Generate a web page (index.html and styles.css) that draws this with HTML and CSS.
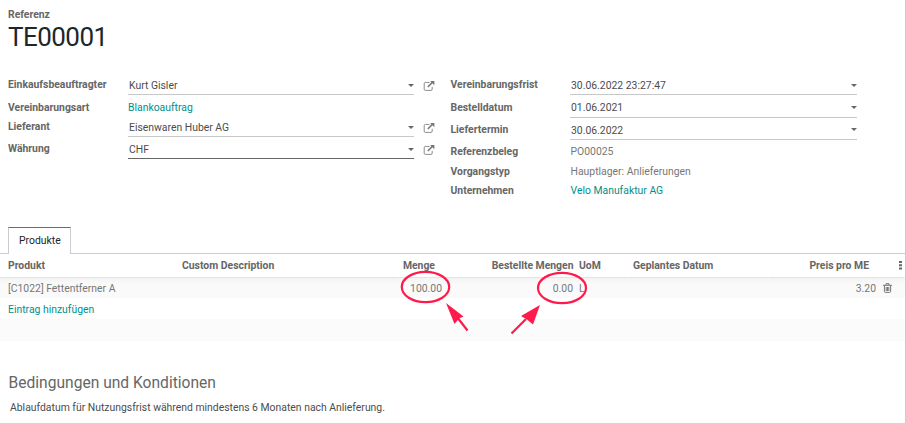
FILE: index.html
```html
<!DOCTYPE html>
<html lang="de">
<head>
<meta charset="utf-8">
<title>TE00001</title>
<link rel="stylesheet" href="styles.css">
</head>
<body>
<svg class="defs" width="0" height="0">
  <symbol id="ext" viewBox="0 0 12 12">
    <path d="M6.5 2.4H2.4Q1.2 2.4 1.2 3.6V9.2Q1.2 10.4 2.4 10.4H8Q9.2 10.4 9.2 9.2V6.8" fill="none" stroke="currentColor" stroke-width=".85"/>
    <path d="M4.8 7L9.4 2.4" stroke="currentColor" stroke-width="1.5"/>
    <path d="M7.2 1H11.4V5.2Z" fill="currentColor"/>
  </symbol>
</svg>
<main class="sheet">
  <header class="title">
    <div class="label">Referenz</div>
    <h1>TE00001</h1>
  </header>
  <section class="groups">
    <div class="group">
      <div class="field"><span class="label">Einkaufsbeauftragter</span><span class="input">Kurt Gisler<i class="caret"></i></span><svg class="ext"><use href="#ext"/></svg></div>
      <div class="field art"><span class="label">Vereinbarungsart</span><span class="value link">Blankoauftrag</span></div>
      <div class="field"><span class="label">Lieferant</span><span class="input">Eisenwaren Huber AG<i class="caret"></i></span><svg class="ext"><use href="#ext"/></svg></div>
      <div class="field currency"><span class="label">Währung</span><span class="input active">CHF<i class="caret"></i></span><svg class="ext"><use href="#ext"/></svg></div>
    </div>
    <div class="group right">
      <div class="field"><span class="label">Vereinbarungsfrist</span><span class="input">30.06.2022 23:27:47<i class="caret"></i></span></div>
      <div class="field ordered"><span class="label">Bestelldatum</span><span class="input">01.06.2021<i class="caret"></i></span></div>
      <div class="field delivery"><span class="label">Liefertermin</span><span class="input">30.06.2022<i class="caret"></i></span></div>
      <div class="field plain"><span class="label">Referenzbeleg</span><span class="value">PO00025</span></div>
      <div class="field plain"><span class="label">Vorgangstyp</span><span class="value">Hauptlager: Anlieferungen</span></div>
      <div class="field plain last"><span class="label">Unternehmen</span><span class="value link">Velo Manufaktur AG</span></div>
    </div>
  </section>
  <nav class="tabs"><span class="tab">Produkte</span></nav>
  <section class="table">
    <div class="row head">
      <span>Produkt</span><span>Custom Description</span><span class="num qty">Menge</span><span class="num ordered-qty">Bestellte Mengen</span><span class="uom">UoM</span><span class="date">Geplantes Datum</span><span class="num price">Preis pro ME</span><span class="more"><svg width="3" height="9"><path d="M0 0h3v2H0zM0 3.3h3v2H0zM0 6.6h3v2H0z" fill="currentColor"/></svg></span>
    </div>
    <div class="row item">
      <span>[C1022] Fettentferner A</span><span></span><span class="num">100.00</span><span class="num">0.00</span><span class="uom">L</span><span></span><span class="num unit-price">3.20</span><span class="trash"><svg width="9" height="10" viewBox="0 0 9 10"><path d="M0 2.3H9M3 2V.7H6V2M1.4 2.5V8.4Q1.4 9.4 2.4 9.4H6.6Q7.6 9.4 7.6 8.4V2.5M3.2 4V8M4.5 4V8M5.8 4V8" fill="none" stroke="currentColor" stroke-width=".9"/></svg></span>
    </div>
    <div class="row add"><a class="link">Eintrag hinzufügen</a></div>
    <div class="row empty"></div>
  </section>
  <section class="terms">
    <h2>Bedingungen und Konditionen</h2>
    <p>Ablaufdatum für Nutzungsfrist während mindestens 6 Monaten nach Anlieferung.</p>
  </section>
  <svg class="marks" width="210" height="75" viewBox="395 265 210 75">
    <g fill="none" stroke="#ff1a4b" stroke-width="2.2">
      <ellipse cx="425.5" cy="287" rx="23.7" ry="15.2"/>
      <ellipse cx="562" cy="288" rx="24" ry="15.2"/>
      <path d="M467.5 330.5L457 317M511.5 333.5L526 319"/>
    </g>
    <path d="M446 303L463.5 316.5L459 318.5L454.5 324ZM540 305L533 324.5L527 319.5L521 316Z" fill="#ff1a4b"/>
  </svg>
</main>
</body>
</html>
```
FILE: styles.css
```css
* { box-sizing: border-box; }
body { margin: 0; background: #fff; color: #666; font: 10.4px/16px Roboto, sans-serif; }
.defs { display: block; }
.sheet { position: relative; width: 906px; height: 423px; border-right: 1px solid #c9ccd2; overflow: hidden; }
.title { height: 75px; padding: 7px 8px 0; }
.label { font-weight: 700; color: #666; }
h1 { margin: 0; font-size: 26px; line-height: 29px; font-weight: 400; letter-spacing: -.55px; color: #212529; }
.groups { display: flex; height: 152px; }
.group { width: 442px; padding-left: 8px; }
.right { width: 415px; }
.field { display: grid; grid-template-columns: 120px 286px 12px; height: 20px; }
.right .field { grid-template-columns: 120px 287px; }
.right .label, .right .value { padding-left: .5px; }
.field .label { padding-top: 2px; }
.input { display: flex; justify-content: space-between; align-items: flex-start; height: 20px; padding: 3px 0 0 1px; border-bottom: 1px solid #c8c8c8; color: #4c4c4c; }
.active { border-color: #666; }
.caret { width: 6px; margin-top: 6px; border: 3px solid transparent; border-top-color: #666; border-bottom: 0; }
.ext { width: 12px; height: 12px; margin: 5px 0 0 9px; color: #777; }
.value { padding-top: 2px; color: #777; }
.link { color: #008f8c; }
.art { margin-top: 3px; height: 19px; }
.currency { margin-top: 2px; }
.ordered { margin-top: 3px; }
.ordered .input { padding-top: 2px; }
.delivery { margin-top: 2px; }
.delivery .caret { margin-top: 5px; }
.plain { margin-top: 2px; height: 18px; }
.last { margin-top: 1px; }
.tabs { display: flex; height: 27px; padding-left: 8px; border-bottom: 1px solid #c9ccd2; }
.tab { width: 63px; height: 27px; padding: 5px 0 5px 10px; border: 1px solid #c9ccd2; border-top-color: #875a7b; border-bottom: 0; background: #fff; color: #212529; }
.row { display: grid; grid-template-columns: 179px 220px 47px 131px 52px 140px 110px 26px; height: 21px; line-height: 23px; }
.row > * { padding: 0 4px 0 3px; }
.row > :first-child { padding-left: 8px; }
.row .num { text-align: right; }
.row .uom { padding-left: 2px; }
.head { height: 23px; font-weight: 700; }
.head > span { border-bottom: 1px solid #e1e3e8; border-right: 1px solid #fff; }
.row .qty { padding-right: 10px; }
.row .ordered-qty { padding-right: 2.5px; }
.row .date { padding-left: 4px; }
.row .price { padding-right: 9px; }
.row .unit-price { padding-right: 3px; }
.head .more { padding: 7px 0 0 20px; line-height: 0; }
.item { background: linear-gradient(#f2f2f2, #fafafa 7px); color: #777; }
.item .trash { padding: 6px 0 0 4px; line-height: 0; color: #666; }
.empty { height: 22px; background: #fbfbfb; }
.terms { padding: 32px 8px 0; }
h2 { margin: 0 0 0 .5px; font-size: 15.6px; line-height: 20px; font-weight: 400; }
.terms p { margin: 7px 0 0 2px; color: #4c4c4c; }
.marks { position: absolute; left: 395px; top: 265px; }
```
